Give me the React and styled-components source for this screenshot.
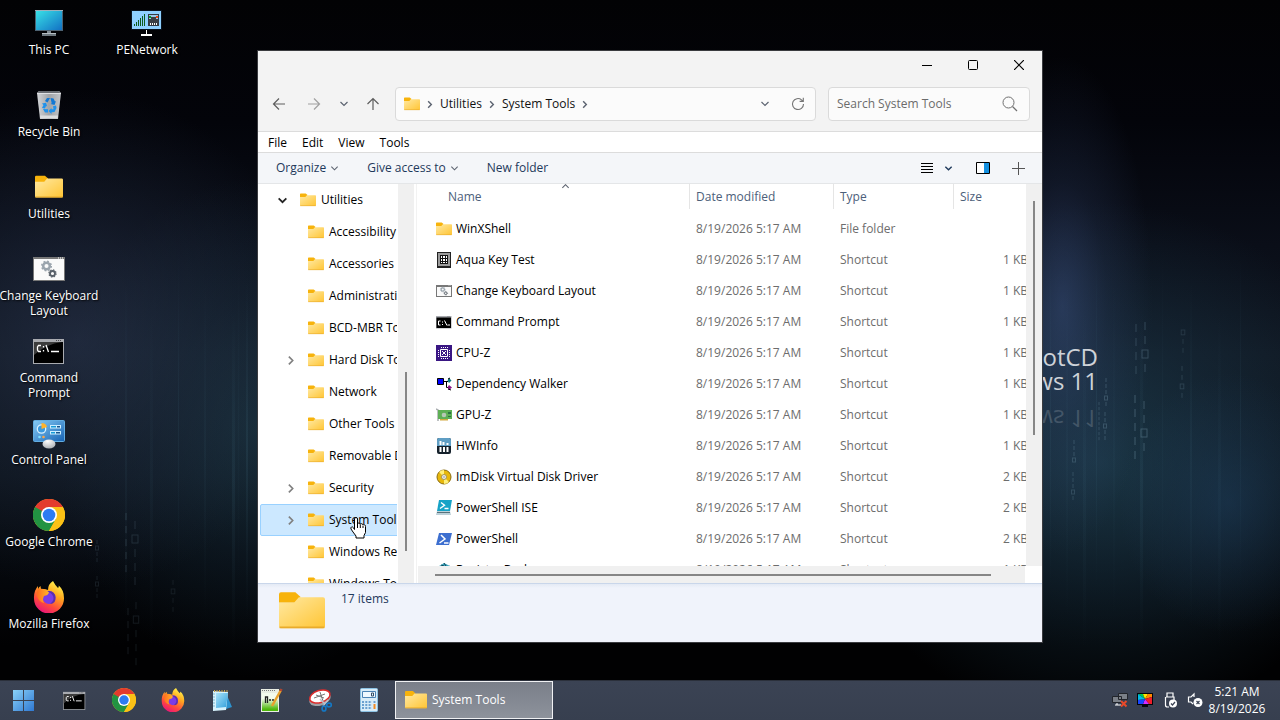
import React from 'react';
import styled, { createGlobalStyle } from 'styled-components';

const GlobalStyle = createGlobalStyle`
  * {
    box-sizing: border-box;
  }
  body {
    margin: 0;
    font-family: 'Open Sans', 'Noto Sans', sans-serif;
    font-size: 12px;
    line-height: 16px;
    overflow: hidden;
  }
  button, input {
    font: inherit;
    color: inherit;
    border: 0;
    padding: 0;
    background: none;
  }
  ul {
    list-style: none;
    margin: 0;
    padding: 0;
  }
  svg {
    display: block;
    flex: none;
  }
`;

const Screen = styled.div`
  display: flex;
  flex-direction: column;
  height: 100vh;
  background: #020306;
`;

const Desktop = styled.main`
  position: relative;
  flex: 1;
  min-height: 0;
  overflow: hidden;
  background:
    radial-gradient(ellipse 90px 250px at 83% 45%, rgba(62, 84, 134, 0.5), rgba(52, 72, 114, 0.22) 50%, rgba(40, 56, 90, 0)),
    radial-gradient(ellipse 110px 130px at 96% 74%, rgba(34, 70, 106, 0.4), rgba(34, 66, 98, 0.2) 50%, rgba(34, 66, 98, 0)),
    radial-gradient(ellipse 280px 260px at 86% 68%, rgba(36, 76, 96, 0.6), rgba(30, 62, 82, 0.35) 50%, rgba(26, 50, 70, 0)),
    radial-gradient(ellipse 240px 250px at 6% 50%, rgba(48, 60, 88, 0.5), rgba(40, 52, 76, 0.28) 50%, rgba(34, 46, 70, 0)),
    radial-gradient(ellipse 200px 250px at 20% 63%, rgba(34, 68, 84, 0.5), rgba(30, 58, 76, 0.25) 50%, rgba(24, 46, 60, 0)),
    linear-gradient(#020204 0%, #03040a 18%, #0a0e18 36%, #0f1620 52%, #0b121a 70%, #05080d 83%, #010102 95%);
`;

const Rain = styled.svg`
  position: absolute;
  inset: 0;
  width: 100%;
  height: 100%;
`;

const Brand = styled.div`
  position: absolute;
  top: 345px;
  right: 182px;
  text-align: right;
  color: #ced2d8;
  font-size: 24px;
  line-height: 24px;
`;

const Reflection = styled.div`
  margin-top: 14px;
  transform: scaleY(-1);
  color: #98a3ad;
  opacity: 0.3;
`;

const Shortcuts = styled.ul`
  position: relative;
  display: grid;
  grid-auto-flow: column;
  grid-template-rows: repeat(auto-fill, 82px);
  grid-auto-columns: 98px;
  height: 100%;
`;

const Shortcut = styled.button`
  display: flex;
  flex-direction: column;
  align-items: center;
  gap: 3px;
  width: 102px;
  margin: 0 -2px;
  padding: 7px 0 0;
  color: #fff;
  line-height: 15px;
  text-shadow: 1px 1px 2px #000;
`;

const IconBox = styled.span`
  display: grid;
  place-items: center;
  height: 32px;
`;

const Window = styled.section`
  position: absolute;
  inset: 50px 237px 37px 257px;
  display: flex;
  flex-direction: column;
  border: 1px solid #3a3b3f;
  background: #fff;
  color: #111;
`;

const Head = styled.header`
  background: #f3f3f3;
  border-bottom: 1px solid #dcdcdc;
`;

const TitleBar = styled.div`
  display: flex;
  justify-content: flex-end;
  height: 28px;
`;

const CaptionButton = styled.button`
  display: grid;
  place-items: center;
  width: 46px;
`;

const NavBar = styled.div`
  display: flex;
  align-items: center;
  height: 52px;
  padding: 0 12px 2px 9px;
`;

const NavButton = styled.button`
  display: grid;
  place-items: center;
  width: ${(p) => p.$width || 24}px;
  height: 24px;
  opacity: ${(p) => (p.disabled ? 0.55 : 1)};
`;

const Address = styled.div`
  flex: 1;
  display: flex;
  align-items: center;
  height: 34px;
  margin-right: 12px;
  padding: 0 1px 0 8px;
  border: 1px solid #dadada;
  border-radius: 4px;
  background: #fbfbfb;
`;

const Crumb = styled.button`
  margin: 0 5px 0 6px;
`;

const FirstMark = styled.span`
  margin-left: 5px;
`;

const Spacer = styled.span`
  flex: 1;
`;

const SearchBox = styled.label`
  display: flex;
  align-items: center;
  width: 202px;
  height: 34px;
  padding: 0 11px 0 8px;
  border: 1px solid #dadada;
  border-radius: 4px;
  background: #fbfbfb;
`;

const SearchInput = styled.input`
  flex: 1;
  min-width: 0;
  outline: 0;
  &::placeholder {
    color: #6b6b6b;
    opacity: 1;
  }
`;

const MenuBar = styled.nav`
  display: flex;
  align-items: center;
  gap: 15px;
  height: 21px;
  padding: 1px 10px 0;
  border-bottom: 1px solid #dcdcdc;
  color: #000;
`;

const Toolbar = styled.div`
  display: flex;
  align-items: center;
  height: 31px;
  padding: 0 17px 0 18px;
  border-bottom: 1px solid #e4e6e8;
  background: #f4f6f9;
  color: #1e395b;
`;

const ToolButton = styled.button`
  display: flex;
  align-items: center;
  gap: 4px;
  margin-right: ${(p) => p.$after || 0}px;
`;

const Body = styled.div`
  flex: 1;
  display: flex;
  min-height: 0;
`;

const Tree = styled.ul`
  width: 139px;
  overflow: hidden;
  color: #000;
`;

const TreeItem = styled.li`
  position: relative;
`;

const TreeButton = styled.button`
  display: flex;
  align-items: center;
  gap: 5px;
  width: 180px;
  height: 32px;
  margin-left: 2px;
  padding-left: ${(p) => (p.$root ? 15 : 23)}px;
  border: 1px solid ${(p) => (p.$selected ? '#99d1ff' : 'transparent')};
  border-radius: 2px;
  background: ${(p) => (p.$selected ? '#cce8ff' : 'none')};
  white-space: nowrap;
`;

const Twisty = styled.span`
  flex: none;
  display: grid;
  place-items: center;
  width: 12px;
  height: 12px;
  margin-right: 7px;
`;

const Pointer = styled.svg`
  position: absolute;
  left: 92px;
  top: 13px;
`;

const VScroll = styled.div`
  width: 16px;
  padding-top: ${(p) => p.$offset}px;
  background: #f0f0f0;
  margin-left: ${(p) => p.$gap || 0}px;
`;

const VThumb = styled.div`
  width: 2px;
  height: ${(p) => p.$size}%;
  margin-left: 7px;
  background: #868686;
`;

const Splitter = styled.div`
  width: 4px;
  border-right: 1px solid #fff;
  background: linear-gradient(90deg, #fff 2px, #f2f2f2 2px);
`;

const ListPane = styled.div`
  flex: 1;
  display: flex;
  flex-direction: column;
  min-width: 0;
`;

const ListTop = styled.div`
  flex: 1;
  display: flex;
  min-height: 0;
`;

const ListView = styled.div`
  position: relative;
  flex: 1;
  min-width: 0;
  overflow: hidden;
`;

const SortMark = styled.span`
  position: absolute;
  left: 143px;
  top: -2px;
`;

const Files = styled.table`
  width: 616px;
  table-layout: fixed;
  border-collapse: separate;
  border-spacing: 0;
  color: #6d6d6d;
`;

const HeadCell = styled.th`
  width: ${(p) => p.$width}px;
  height: 25px;
  padding: 0 0 0 ${(p) => p.$pad || 6}px;
  border-right: 1px solid #e5e5e5;
  color: #4c607a;
  font-weight: 400;
  text-align: left;
  &:last-child {
    border-right: 0;
  }
`;

const Row = styled.tr`
  height: 31px;
`;

const Cell = styled.td`
  padding: 0 6px;
  text-align: ${(p) => (p.$right ? 'right' : 'left')};
  white-space: nowrap;
`;

const FileName = styled.div`
  display: flex;
  align-items: center;
  gap: 4px;
  padding-left: 12px;
  color: #000;
`;

const Gap = styled.tbody`
  height: 4px;
`;

const HScroll = styled.div`
  height: 17px;
  margin-right: 17px;
  padding: 8px 34px 0 17px;
  background: #f0f0f0;
`;

const HThumb = styled.div`
  height: 2px;
  background: #868686;
`;

const Details = styled.footer`
  display: flex;
  gap: 16px;
  height: 59px;
  padding: 4px 21px;
  border-top: 1px solid #c9d6ea;
  background: linear-gradient(#e4eaf5, #f0f3fb 4px);
  color: #1e395b;
`;

const ItemCount = styled.span`
  padding-top: 3px;
`;

const Taskbar = styled.footer`
  display: flex;
  align-items: flex-start;
  height: 40px;
  border-top: 1px solid #2b303b;
  background: linear-gradient(#3b4354, #373f4f);
  color: #fff;
`;

const TaskIcon = styled.button`
  display: grid;
  place-items: center;
  width: ${(p) => p.$width || 49}px;
  height: 38px;
`;

const Pinned = styled.div`
  display: flex;
  margin: 0 2px 0 3px;
`;

const TaskButton = styled.button`
  display: flex;
  align-items: center;
  gap: 5px;
  width: 158px;
  height: 38px;
  padding-left: 9px;
  border: 1px solid #f0f1f3;
  background: linear-gradient(#7a7f89, #8d929b);
`;

const Tray = styled.div`
  display: flex;
  align-items: center;
  height: 38px;
  margin-left: auto;
`;

const TrayIcons = styled.div`
  display: flex;
  gap: 9px;
`;

const Clock = styled.time`
  display: flex;
  flex-direction: column;
  width: 60px;
  margin: 0 13px 0 4px;
  line-height: 17px;
  text-align: center;
`;

const Folder = ({ size = 16 }) => (
  <svg width={size} height={size} viewBox="0 0 16 16">
    <defs>
      <linearGradient id="folder" x1="0" y1="0" x2="1" y2="1">
        <stop offset="0" stopColor="#ffe9a3" />
        <stop offset="1" stopColor="#ffc534" />
      </linearGradient>
    </defs>
    <path d="M0 2.200q0-.7.7-.7h5l1.800 1.600-1.200 2H0z" fill="#f7b30c" />
    <path d="M0 5h5.300l1.600-1.800h8.400q.7 0 .7.7v9.400q0 .7-.7.7H.7q-.7 0-.7-.7z" fill="url(#folder)" />
    <path d="M.2 13.700h15.600" stroke="#e9ab2b" strokeWidth=".6" />
  </svg>
);

const Chevron = ({ dir = 'down', size = 9, color = '#5c6370', weight = 1.2 }) => {
  const d = {
    down: 'M1.500 3l3.500 3.500L8.500 3',
    right: 'M3.500 1.500L7 5 3.500 8.500',
    up: 'M1.500 6.500L5 3l3.500 3.500',
  }[dir];
  return (
    <svg width={size} height={size} viewBox="0 0 10 10">
      <path d={d} fill="none" stroke={color} strokeWidth={weight} />
    </svg>
  );
};

const Arrow = ({ turn = 0 }) => (
  <svg width="14" height="14" viewBox="0 0 14 14">
    <path d="M13 7H1.500M7 1.500L1.500 7 7 12.500" fill="none" stroke="#5e5e5e" strokeWidth="1.200" transform={`rotate(${turn} 7 7)`} />
  </svg>
);

const Monitor = () => (
  <svg width="32" height="32" viewBox="0 0 32 32">
    <defs>
      <linearGradient id="screen" x1="0" y1="0" x2="1" y2="1">
        <stop offset="0" stopColor="#38e0e6" />
        <stop offset="1" stopColor="#1271c4" />
      </linearGradient>
    </defs>
    <path d="M2 3h28v21H2z" fill="#4d6272" />
    <path d="M2 3h28v1H2z" fill="#9fb1bd" />
    <path d="M3 4h26v19H3z" fill="url(#screen)" />
    <path d="M14 24h4v2h-4z" fill="#7f8a92" />
    <path d="M9 26h14v3H9z" fill="#6d777e" />
    <path d="M9 26h14v1H9z" fill="#b5bec4" />
  </svg>
);

const NetworkMonitor = () => (
  <svg width="32" height="32" viewBox="0 0 32 32">
    <path d="M0 3h31v20H0z" fill="#0a1420" />
    <path d="M1 4h29v18H1z" fill="#8fd0ff" />
    <path d="M3 17h1v2H3zM5 15h1v4H5zM7 13h1v6H7zM9 11h1v8H9zM11 9h1v10h-1zM13 7h1v12h-1z" fill="#0e5a1c" />
    <path d="M17 7h11v12H17z" fill="#343a42" />
    <path d="M18 8h9v4h-9z" fill="#9cc7e8" />
    <path d="M20 10h5v2h-5zM18 12h9v6h-9z" fill="#3b3f45" />
    <path d="M18 9h2v2h-2z" fill="#0c9b25" />
    <path d="M25 9h2v2h-2z" fill="#f24a13" />
    <path d="M19 16h1v2h-1zM21 16h1v2h-1zM23 16h1v2h-1zM25 16h1v2h-1z" fill="#fff" />
    <path d="M15 23h1v4h5v2H10v-2h5z" fill="#fff" />
  </svg>
);

const RecycleBin = () => (
  <svg width="32" height="32" viewBox="0 0 32 32">
    <defs>
      <linearGradient id="bin" x1="0" x2="1">
        <stop offset="0" stopColor="#d3d5d8" />
        <stop offset=".5" stopColor="#a1a4a8" />
        <stop offset="1" stopColor="#c3c6ca" />
      </linearGradient>
    </defs>
    <path d="M4 4l2-2h20l2 2-3 26H7z" fill="url(#bin)" />
    <path d="M4.500 4l2-2h19l2 2z" fill="#686c72" />
    <path d="M4 4.500h24" stroke="#dfe1e4" />
    <path d="M7 26.500h18l-.4 3H7.400z" fill="#dcdedf" />
    <path d="M12 12l2-3h3l-2.500 4.500zM17.500 9l3 .5 1.500 3 1-.5-1.500 4-4-1 1.200-.8z" fill="#1278d4" />
    <path d="M9 14.500l4-.8 1.200 3.800-1.200-.5-1 2.500-3-.5L10.500 16zM10 20l5 .2v3.300h-3zM23 16.500l.5 2.500-2 4-3 .3V25l-3-3 3-3v1.300h2l-.5-3z" fill="#1f92ec" />
  </svg>
);

const gear = (x, y, r, color) => (
  <g fill="none" stroke={color}>
    <circle cx={x} cy={y} r={r} strokeWidth={r * 0.75} />
    <circle cx={x} cy={y} r={r * 1.45} strokeWidth={r * 0.45} strokeDasharray={`${r * 0.57} ${r * 0.57}`} />
  </g>
);

const GearWindow = ({ size = 32 }) => (
  <svg width={size} height={size} viewBox="0 0 32 32">
    <path d="M0 4h32v24H0z" fill="#777" />
    <path d={size < 20 ? 'M2 8h28v18H2z' : 'M1 6h30v21H1z'} fill="#fafafa" />
    <path d="M25 4.500h1v1h-1zM27 4.500h1v1h-1zM29 4.500h1v1h-1z" fill="#fff" />
    {gear(13.5, 13, 3.3, '#9aa4ad')}
    {gear(19.5, 20.5, 2.5, '#59616a')}
  </svg>
);

const Console = ({ size = 32, small }) => (
  <svg width={size} height={size} viewBox="0 0 32 32">
    <path d="M0 4h31v25H0z" fill="#a9abb0" />
    <path d="M1 7h29v21H1z" fill="#000" />
    {!small && <path d="M1 7h28Q13 9 1 20z" fill="#3c3c3c" />}
    <path d="M23 5h1v1h-1zM25 5h1v1h-1zM27 5h1v1h-1z" fill="#4c4c50" />
    {small ? (
      <path d="M9 14H5v8h4M13 15v2M13 20v2M17 13l5 10M23 22h5" fill="none" stroke="#fff" strokeWidth="2" />
    ) : (
      <path d="M8 10.500H5.500L4.500 12v3l1 1.500H8M10.500 11v1.500M10.500 15v1.500M13 10l2.500 7M18 16.500h8" fill="none" stroke="#fff" strokeWidth="1.300" />
    )}
  </svg>
);

const ControlPanel = () => (
  <svg width="32" height="32" viewBox="0 0 32 32">
    <defs>
      <linearGradient id="panel" x1="0" y1="0" x2="1" y2="1">
        <stop offset="0" stopColor="#86cbf5" />
        <stop offset="1" stopColor="#1763b4" />
      </linearGradient>
      <radialGradient id="knob" cx=".4" cy=".2" r=".8">
        <stop offset="0" stopColor="#fff" />
        <stop offset="1" stopColor="#aeb2b6" />
      </radialGradient>
    </defs>
    <rect x=".5" y="3.500" width="31" height="21" rx="1" fill="url(#panel)" stroke="#63aee2" />
    <circle cx="8.500" cy="12" r="4.200" fill="#3c9ade" stroke="#d8f1ff" strokeWidth="1.300" />
    <path d="M8.500 12V6q4.500 0 5.500 4z" fill="#ffb32c" />
    <path d="M17 8h11v3.500H17zM17 14h11v3.500H17z" fill="#cdeeff" />
    <path d="M18 9h5v1.500h-5zM18 15h4v1.500h-4z" fill="#179ad8" />
    <path d="M24 9h3v1.500h-3zM23 15h4v1.500h-4z" fill="#18548e" />
    <circle cx="6.500" cy="20" r="1.300" fill="#7fe0ff" />
    <circle cx="10.500" cy="20" r="1.300" fill="#ffa647" />
    <ellipse cx="16" cy="27" rx="6.500" ry="4.500" fill="url(#knob)" />
  </svg>
);

const Chrome = ({ size = 32 }) => (
  <svg width={size} height={size} viewBox="0 0 32 32">
    <circle cx="16" cy="16" r="16" fill="#fbc116" />
    <path d="M2.140 8A16 16 0 0 1 29.860 8H16l-6.900 12z" fill="#e33b2e" />
    <path d="M2.140 8A16 16 0 0 0 16 32l6.900-12-6.900-4z" fill="#229342" />
    <path d="M16 32A16 16 0 0 0 29.860 8H16v8l6.900 4z" fill="#fbc116" />
    <circle cx="16" cy="16" r="8" fill="#fff" />
    <circle cx="16" cy="16" r="6.300" fill="#2c7bf2" />
  </svg>
);

const Firefox = ({ size = 32 }) => (
  <svg width={size} height={size} viewBox="0 0 32 32">
    <defs>
      <linearGradient id="fox" x1=".8" y1=".05" x2=".3" y2="1">
        <stop offset="0" stopColor="#fff44f" />
        <stop offset=".35" stopColor="#ffa81f" />
        <stop offset=".7" stopColor="#ff4a3d" />
        <stop offset="1" stopColor="#e9137b" />
      </linearGradient>
      <linearGradient id="foxhead" x2="1">
        <stop offset="0" stopColor="#ff6a1f" />
        <stop offset="1" stopColor="#ffb629" />
      </linearGradient>
    </defs>
    <path d="M20 0q2 4 5 7 1-1 .7-2.500Q31 9 31 17a15 15 0 0 1-30 1Q.5 10 5 5v3q1-2 2.500-3l.5 3q4-.5 7 1Q15 3 20 0z" fill="url(#fox)" />
    <circle cx="16" cy="16.500" r="6.500" fill="#7a3be8" />
    <path d="M16 10q6 0 6.500 6.500T17 23q5-4 3-8t-6-4z" fill="#5a2fae" />
    <path d="M5 8q5-1 8 1l3 2.500q-1 3-5 3.500-2 4 0 7-7-2-7.500-10z" fill="url(#foxhead)" />
  </svg>
);

const Notepad = () => (
  <svg width="24" height="24" viewBox="0 0 24 24">
    <defs>
      <linearGradient id="note" x1="0" y1="0" x2="1" y2="1">
        <stop offset="0" stopColor="#a9e2f8" />
        <stop offset="1" stopColor="#2f9fdc" />
      </linearGradient>
    </defs>
    <path d="M16 5l6 14-9 3z" fill="#2d93cf" />
    <path d="M3 3l15 1-2 18-13 1z" fill="#d6f2fc" />
    <path d="M6 5h12l-2 14-10 1z" fill="url(#note)" />
    <path d="M3 6h2M3 9h2M3 12h2M3 15h2M3 18h2" stroke="#7fb7d0" />
    <path d="M4 3h14" stroke="#c9a64a" strokeWidth="2" strokeDasharray="1 1.500" />
  </svg>
);

const NotepadPlus = () => (
  <svg width="24" height="24" viewBox="0 0 24 24">
    <defs>
      <linearGradient id="npp" x1="0" y1="0" x2="0" y2="1">
        <stop offset=".3" stopColor="#f4fbee" />
        <stop offset=".9" stopColor="#4fb80c" />
      </linearGradient>
    </defs>
    <path d="M2 1h18v23H2z" fill="#e9eee4" />
    <path d="M3 5h16v18H3z" fill="url(#npp)" />
    <path d="M3 2.500h14" stroke="#777" strokeDasharray="1 1" />
    <path d="M6.500 15V9h2v6M10 12h2M13 12h2" fill="none" stroke="#222" strokeWidth="1.300" />
    <path d="M22 2L13 18" stroke="#e9a12c" strokeWidth="2.500" />
    <path d="M22.500 1l-1 2" stroke="#b04632" strokeWidth="2.500" />
  </svg>
);

const Snip = () => (
  <svg width="24" height="24" viewBox="0 0 24 24">
    <ellipse cx="12" cy="11" rx="11" ry="6.500" fill="#9ea0a5" transform="rotate(-18 12 11)" />
    <ellipse cx="12" cy="8.500" rx="10.500" ry="6" fill="#fff" stroke="#dd2c2c" strokeWidth="1.500" transform="rotate(-18 12 9)" />
    <path d="M6 10l11-4M12 4l3 9M8 7l8 3" stroke="#777" />
    <path d="M12 11l5 5M20 12l-5 6" stroke="#bcc2c9" strokeWidth="1.500" />
    <g fill="none" stroke="#1478c4" strokeWidth="1.700">
      <ellipse cx="21" cy="17" rx="2.400" ry="1.800" />
      <ellipse cx="16" cy="20.500" rx="1.900" ry="2.500" />
    </g>
  </svg>
);

const Calculator = () => (
  <svg width="24" height="24" viewBox="0 0 24 24">
    <rect x="3.500" y=".5" width="17" height="23" rx="1" fill="#d8ecf8" stroke="#8cc2e4" />
    <path d="M5.500 3.500h13v6h-13z" fill="#eef8ff" stroke="#4a83b5" />
    <path d="M14.500 5h2v3h-2z" fill="none" stroke="#334e68" />
    <path d="M5 14h10M5 17h10M5 20h10" stroke="#6aa0d0" strokeWidth="2" strokeDasharray="2 1.300" />
    <path d="M17.500 13v2" stroke="#6aa0d0" strokeWidth="2" />
    <path d="M17.500 16v5" stroke="#f08a24" strokeWidth="2" />
  </svg>
);

const Start = () => (
  <svg width="21" height="21" viewBox="0 0 21 21">
    <defs>
      <linearGradient id="start" gradientUnits="userSpaceOnUse" x1="0" y1="0" x2="21" y2="21">
        <stop offset="0" stopColor="#8ad2f8" />
        <stop offset="1" stopColor="#2f78d2" />
      </linearGradient>
    </defs>
    <path d="M0 0h10v10H0zM11 0h10v10H11zM0 11h10v10H0zM11 11h10v10H11z" fill="url(#start)" />
  </svg>
);

// 16px icons of the file list
const small = (children) => (
  <svg width="16" height="16" viewBox="0 0 16 16">{children}</svg>
);

const KeyTest = () => small(
  <>
    <path d="M1 0h14v16H1z" fill="#222" />
    <path d="M2 1h12v13H2z" fill="#9b9b9b" />
    <path d="M4 3h8v9H4z" fill="#fff" />
    <path d="M4.500 3v9M6.500 3v9M9.500 3v9M11.500 3v9M4 3.500h8M4 6.500h8M4 9.500h8M4 11.500h8" stroke="#111" />
  </>
);

const CpuZ = () => small(
  <>
    <path d="M0 0h16v16H0z" fill="#391683" />
    <path d="M4.500 4.500h7v7h-7z" fill="none" stroke="#fff" />
    <path d="M5 2.500h7M5 13.500h7" stroke="#fff" strokeDasharray="1 1" />
    <path d="M2.500 5v7M13.500 5v7" stroke="#fff" strokeDasharray="1 1" />
    <path d="M6 6h1v1H6zM9 6h1v1H9zM7 7h2v2H7zM6 9h1v1H6zM9 9h1v1H9z" fill="#fff" />
  </>
);

const DepWalker = () => small(
  <>
    <path d="M1.500 2.500h6v6h-6z" fill="#00f" stroke="#000" />
    <path d="M8 5.500h4M10.500 5.500v6H13" fill="none" stroke="#000" />
    <path d="M13 2l2.500 2.500L13 7l-1.500-2.500z" fill="#087b80" />
    <path d="M13 9l3 2.500-3 2.500-1.500-2.500z" fill="#8a138a" />
    <path d="M12 3l2-1M12 13l3 1" stroke="#000" />
  </>
);

const GpuZ = () => small(
  <>
    <path d="M0 2l2 1v11" fill="none" stroke="#a9adb0" strokeWidth="1.500" />
    <path d="M2 3h14v9H2z" fill="#5eaf55" />
    <path d="M4 12h8v1.500H4z" fill="#d0a941" />
    <circle cx="8" cy="8" r="2.300" fill="#b7c7b6" />
    <path d="M12 5h3v2h-3zM12 9h3v1h-3z" fill="#2d7444" />
  </>
);

const HwInfo = () => small(
  <>
    <rect x="1" width="14" height="16" rx="2" fill="#15212b" />
    <path d="M1 2q0-2 2-2h10q2 0 2 2v6H1z" fill="#5f9ec4" />
    <path d="M4.500 3v4M7.500 4v3M11.500 5v2M4.500 9v5M8 9v5M11.500 9v5" stroke="#fff" strokeWidth="2" />
  </>
);

const Disc = () => small(
  <>
    <circle cx="8" cy="8" r="7" fill="#e8b80c" stroke="#8a6c10" />
    <path d="M8 8L3 3a7 7 0 0 1 5-2zM8 8l5 5a7 7 0 0 1-5 2z" fill="#fff07c" />
    <circle cx="8" cy="8" r="2.500" fill="#f0f0f0" stroke="#a59457" />
    <circle cx="8" cy="8" r=".8" fill="#8f8f8f" />
  </>
);

const PowerShellIse = () => small(
  <>
    <path d="M3 0h13l-2 11H1z" fill="#16a3c7" />
    <path d="M1 11h13l1 4H0z" fill="#bcd0d8" />
    <path d="M1 12.500h13" stroke="#58727c" />
    <path d="M5 2.500l3.500 2.700L4 8.500M8.500 8.500h4" fill="none" stroke="#fff" strokeWidth="1.400" />
  </>
);

const PowerShell = () => small(
  <>
    <path d="M3 2h13l-3 12H0z" fill="#3d6fd0" />
    <path d="M5 4l4 4-5.500 4M8 12h4.500" fill="none" stroke="#fff" strokeWidth="1.500" />
  </>
);

const Registry = () => small(
  <>
    <path d="M1 5l4-2 3-2 6 3 1 3v6l-7 3-7-3z" fill="#39a4bd" />
    <path d="M5 3l3 1v3M8 1l2 3M1 5l4 2M14 4l-3 2" stroke="#12485a" fill="none" />
  </>
);

const Network = () => small(
  <>
    <path d="M6.500 1.500h9v6h-9zM.5 4.500h9v6h-9z" fill="#7b8088" stroke="#22252b" />
    <path d="M3 13h6M5 11v2" stroke="#fff" />
    <path d="M9 9l5.500 5.500M14.500 9L9 14.500" stroke="#e8492a" strokeWidth="2" />
  </>
);

const Display = () => small(
  <>
    <path d="M0 1h16v12h-5v2H5v-2H0z" fill="#05070a" />
    <path d="M1 2h5l2 5z" fill="#00c853" />
    <path d="M6 2h5L8 7z" fill="#ffe600" />
    <path d="M11 2h4v3L8 7z" fill="#ff8a00" />
    <path d="M15 5v7h-3L8 7z" fill="#ef1d2a" />
    <path d="M12 12H6l2-5z" fill="#d42bff" />
    <path d="M6 12H1V8l7-1z" fill="#1746ff" />
    <path d="M1 8V2l7 5z" fill="#00b8e6" />
  </>
);

const Usb = () => small(
  <>
    <path d="M5 5V1h6v4M4 5h8v3M3.500 5v8q0 2 2 2H7" fill="none" stroke="#fff" strokeWidth="1.200" />
    <circle cx="11" cy="11.500" r="4" fill="#fff" />
    <path d="M9 11.500l1.500 1.500 2.500-3" fill="none" stroke="#3b4354" strokeWidth="1.200" />
  </>
);

const Muted = () => small(
  <>
    <path d="M7 5V2L4 5H1.500v5H4l2 2" fill="none" stroke="#fff" strokeWidth="1.200" />
    <circle cx="11" cy="10.500" r="4.500" fill="#fff" />
    <path d="M9.500 9l3 3M12.500 9l-3 3" stroke="#3b4354" strokeWidth="1.200" />
  </>
);

const shortcuts = [
  { name: 'This PC', icon: <Monitor /> },
  { name: 'Recycle Bin', icon: <RecycleBin /> },
  { name: 'Utilities', icon: <Folder size={28} /> },
  { name: 'Change Keyboard Layout', icon: <GearWindow /> },
  { name: 'Command Prompt', icon: <Console /> },
  { name: 'Control Panel', icon: <ControlPanel /> },
  { name: 'Google Chrome', icon: <Chrome /> },
  { name: 'Mozilla Firefox', icon: <Firefox /> },
  { name: 'PENetwork', icon: <NetworkMonitor /> },
];

const folders = [
  { name: 'Accessibility' },
  { name: 'Accessories' },
  { name: 'Administrative Tools' },
  { name: 'BCD-MBR Tools' },
  { name: 'Hard Disk Tools', nested: true },
  { name: 'Network' },
  { name: 'Other Tools' },
  { name: 'Removable Drive Tools' },
  { name: 'Security', nested: true },
  { name: 'System Tools', nested: true, selected: true },
  { name: 'Windows Recovery' },
  { name: 'Windows Tools' },
];

const files = [
  { name: 'WinXShell', icon: <Folder />, type: 'File folder', size: '' },
  { name: 'Aqua Key Test', icon: <KeyTest />, size: '1 KB' },
  { name: 'Change Keyboard Layout', icon: <GearWindow size={16} />, size: '1 KB' },
  { name: 'Command Prompt', icon: <Console size={16} small />, size: '1 KB' },
  { name: 'CPU-Z', icon: <CpuZ />, size: '1 KB' },
  { name: 'Dependency Walker', icon: <DepWalker />, size: '1 KB' },
  { name: 'GPU-Z', icon: <GpuZ />, size: '1 KB' },
  { name: 'HWInfo', icon: <HwInfo />, size: '1 KB' },
  { name: 'ImDisk Virtual Disk Driver', icon: <Disc />, size: '2 KB' },
  { name: 'PowerShell ISE', icon: <PowerShellIse />, size: '2 KB' },
  { name: 'PowerShell', icon: <PowerShell />, size: '2 KB' },
  { name: 'Registry Backup', icon: <Registry />, size: '1 KB' },
];

// columns of falling bits: x, y, step, scale, opacity, digits
const bits = [
  [1136, 324, 14, 1, 0.22, '1111'],
  [1145, 322, 14, 1, 0.25, '1101'],
  [1135, 395, 14, 1, 0.32, '11111'],
  [1144, 401, 14, 1, 0.3, '1101'],
  [1106, 378, 6, 0.5, 0.25, '11101'],
  [1105, 412, 6, 0.5, 0.25, '11011'],
  [1183, 330, 9, 0.6, 0.14, '011'],
  [1182, 366, 9, 0.6, 0.18, '1101'],
  [1074, 440, 6, 0.5, 0.22, '1110'],
  [1073, 472, 6, 0.5, 0.2, '11101'],
  [1099, 402, 5, 0.4, 0.2, '11111111'],
  [126, 513, 13, 0.9, 0.2, '11111'],
  [135, 521, 14, 1, 0.16, '10111'],
  [97, 540, 6, 0.5, 0.14, '1011'],
  [128, 608, 13, 0.9, 0.13, '1111'],
  [136, 602, 14, 0.9, 0.12, '10111'],
  [97, 576, 6, 0.5, 0.12, '1011'],
  [173, 580, 9, 0.6, 0.1, '1011'],
];

const streaks = [
  [1050, 60], [1066, 30], [1083, 44], [1096, 80], [1113, 28], [1140, 66], [1162, 36],
  [1190, 50], [1218, 34], [1240, 60], [125, 50], [150, 34], [178, 60], [204, 40], [232, 70], [238, 30], [246, 80],
];

function Wallpaper() {
  return (
    <>
      <Rain viewBox="0 0 1280 680" preserveAspectRatio="xMidYMid slice" aria-hidden="true">
        <defs>
          <linearGradient id="streak" x1="0" y1="0" x2="0" y2="1">
            <stop offset="0" stopColor="#4d8196" stopOpacity="0" />
            <stop offset=".5" stopColor="#4d8196" />
            <stop offset="1" stopColor="#4d8196" stopOpacity="0" />
          </linearGradient>
        </defs>
        {streaks.map(([x, strength], i) => (
          <rect key={x} x={x} y={250 + (i % 3) * 30} width={1 + (i % 3)} height="340" fill="url(#streak)" opacity={strength / 600} />
        ))}
        {bits.map(([x, y, step, scale, opacity, digits]) => (
          <g key={`${x}-${y}`} stroke="#8fb4c8" fill="none" opacity={opacity}>
            {[...digits].map((d, i) =>
              d === '0' ? (
                <rect key={i} x={x - 3 * scale} y={y + i * step} width={6 * scale} height={8 * scale} />
              ) : (
                <path key={i} d={`M${x} ${y + i * step}v${8 * scale}`} />
              )
            )}
          </g>
        ))}
      </Rain>
      <Brand>
        <div>BootCD</div>
        <div>Windows 11</div>
        <Reflection aria-hidden="true">Windows 11</Reflection>
      </Brand>
    </>
  );
}

function FolderTree() {
  return (
    <Tree aria-label="Folders">
      <TreeItem>
        <TreeButton $root>
          <Twisty><Chevron size={11} color="#222" weight={1.6} /></Twisty>
          <Folder />
          Utilities
        </TreeButton>
      </TreeItem>
      {folders.map((f) => (
        <TreeItem key={f.name}>
          <TreeButton $selected={f.selected}>
            <Twisty>{f.nested && <Chevron dir="right" size={11} color="#808080" weight={1.5} />}</Twisty>
            <Folder />
            {f.name}
          </TreeButton>
          {f.selected && (
            <Pointer width="17" height="22" viewBox="0 0 17 22" aria-hidden="true">
              <path
                d="M4.500 12.500V2q0-1.500 1.500-1.500T7.500 2v5q0-1 1.300-1t1.400 1.500q0-1 1.400-.8t1.400 1.500q0-.8 1.300-.5t1.200 1.800v6l-1.500 3v2.500h-8V19L3 15 1 12q-.5-1.500.5-2t2 .8z"
                fill="#fff"
                stroke="#000"
              />
              <path d="M7.500 7v4M10.300 8v3M13 9v2" stroke="#000" />
            </Pointer>
          )}
        </TreeItem>
      ))}
    </Tree>
  );
}

function FileList() {
  return (
    <ListView>
      <SortMark><Chevron dir="up" size={9} /></SortMark>
      <Files>
        <thead>
          <tr>
            <HeadCell $width={272} $pad={30}>Name</HeadCell>
            <HeadCell $width={144}>Date modified</HeadCell>
            <HeadCell $width={120}>Type</HeadCell>
            <HeadCell $width={80}>Size</HeadCell>
          </tr>
        </thead>
        <Gap><tr><td /></tr></Gap>
        <tbody>
          {files.map((f) => (
            <Row key={f.name}>
              <Cell><FileName>{f.icon}{f.name}</FileName></Cell>
              <Cell>8/19/2026 5:17 AM</Cell>
              <Cell>{f.type || 'Shortcut'}</Cell>
              <Cell $right>{f.size}</Cell>
            </Row>
          ))}
        </tbody>
      </Files>
    </ListView>
  );
}

function Explorer() {
  return (
    <Window aria-label="System Tools">
      <Head>
        <TitleBar>
          <CaptionButton aria-label="Minimize">
            <svg width="10" height="10"><path d="M0 5.500h10" stroke="#000" /></svg>
          </CaptionButton>
          <CaptionButton aria-label="Maximize">
            <svg width="10" height="10"><rect x=".5" y=".5" width="9" height="9" rx="1" fill="none" stroke="#000" /></svg>
          </CaptionButton>
          <CaptionButton aria-label="Close">
            <svg width="10" height="10"><path d="M0 0l10 10M10 0L0 10" stroke="#000" strokeWidth="1.200" /></svg>
          </CaptionButton>
        </TitleBar>
        <NavBar>
          <NavButton aria-label="Back"><Arrow /></NavButton>
          <NavButton aria-label="Forward" disabled $width={46}><Arrow turn={180} /></NavButton>
          <NavButton aria-label="Recent locations" $width={14}><Chevron size={10} /></NavButton>
          <NavButton aria-label="Up" $width={44}><Arrow turn={90} /></NavButton>
          <Address>
            <Folder />
            <FirstMark><Chevron dir="right" size={9} weight={1.6} /></FirstMark>
            <Crumb>Utilities</Crumb>
            <Chevron dir="right" size={9} weight={1.6} />
            <Crumb>System Tools</Crumb>
            <Chevron dir="right" size={9} weight={1.6} />
            <Spacer />
            <NavButton aria-label="Previous locations" $width={33}><Chevron size={10} /></NavButton>
            <NavButton aria-label="Refresh" $width={33}>
              <svg width="14" height="14" viewBox="0 0 14 14">
                <path d="M12.500 7A5.500 5.500 0 1 1 10.500 2.800L12 4.200M12.300.8v3.600H8.600" fill="none" stroke="#757575" strokeWidth="1.100" />
              </svg>
            </NavButton>
          </Address>
          <SearchBox>
            <SearchInput placeholder="Search System Tools" aria-label="Search System Tools" />
            <svg width="16" height="16" viewBox="0 0 16 16">
              <circle cx="6.500" cy="6.500" r="5.500" fill="none" stroke="#6f6f6f" />
              <path d="M10.500 10.500L15 15" stroke="#6f6f6f" strokeWidth="1.200" />
            </svg>
          </SearchBox>
        </NavBar>
      </Head>
      <MenuBar>
        <button>File</button>
        <button>Edit</button>
        <button>View</button>
        <button>Tools</button>
      </MenuBar>
      <Toolbar>
        <ToolButton $after={28}>Organize <Chevron size={9} /></ToolButton>
        <ToolButton $after={28}>Give access to <Chevron size={9} /></ToolButton>
        <ToolButton>New folder</ToolButton>
        <Spacer />
        <ToolButton aria-label="Details view" $after={11}>
          <svg width="12" height="12"><path d="M0 1.500h12M0 4.500h12M0 7.500h12M0 10.500h12" stroke="#000" /></svg>
        </ToolButton>
        <ToolButton aria-label="More views" $after={23}><Chevron size={9} color="#1e395b" weight={1.5} /></ToolButton>
        <ToolButton aria-label="Preview pane" $after={22}>
          <svg width="14" height="12"><path d="M.5.5h13v11H.5z" fill="#fff" stroke="#000" /><path d="M8 1h5v10H8z" fill="#1390e0" /></svg>
        </ToolButton>
        <ToolButton aria-label="Add">
          <svg width="13" height="13"><path d="M0 6.500h13M6.500 0v13" stroke="#555" /></svg>
        </ToolButton>
      </Toolbar>
      <Body>
        <FolderTree />
        <VScroll $offset={188} $gap={1}><VThumb $size={85} /></VScroll>
        <Splitter />
        <ListPane>
          <ListTop>
            <FileList />
            <VScroll $offset={17}><VThumb $size={64} /></VScroll>
          </ListTop>
          <HScroll><HThumb /></HScroll>
        </ListPane>
      </Body>
      <Details>
        <Folder size={46} />
        <ItemCount>17 items</ItemCount>
      </Details>
    </Window>
  );
}

export default function App() {
  return (
    <Screen>
      <GlobalStyle />
      <Desktop>
        <Wallpaper />
        <Shortcuts>
          {shortcuts.map((s) => (
            <li key={s.name}>
              <Shortcut>
                <IconBox>{s.icon}</IconBox>
                {s.name}
              </Shortcut>
            </li>
          ))}
        </Shortcuts>
        <Explorer />
      </Desktop>
      <Taskbar>
        <TaskIcon aria-label="Start" $width={47}><Start /></TaskIcon>
        <Pinned>
          <TaskIcon aria-label="Command Prompt"><Console size={23} /></TaskIcon>
          <TaskIcon aria-label="Google Chrome"><Chrome size={24} /></TaskIcon>
          <TaskIcon aria-label="Mozilla Firefox"><Firefox size={24} /></TaskIcon>
          <TaskIcon aria-label="Notepad"><Notepad /></TaskIcon>
          <TaskIcon aria-label="Notepad++"><NotepadPlus /></TaskIcon>
          <TaskIcon aria-label="Snipping Tool"><Snip /></TaskIcon>
          <TaskIcon aria-label="Calculator"><Calculator /></TaskIcon>
        </Pinned>
        <TaskButton><Folder size={22} />System Tools</TaskButton>
        <Tray>
          <TrayIcons>
            <Network />
            <Display />
            <Usb />
            <Muted />
          </TrayIcons>
          <Clock>
            <span>5:21 AM</span>
            <span>8/19/2026</span>
          </Clock>
        </Tray>
      </Taskbar>
    </Screen>
  );
}
